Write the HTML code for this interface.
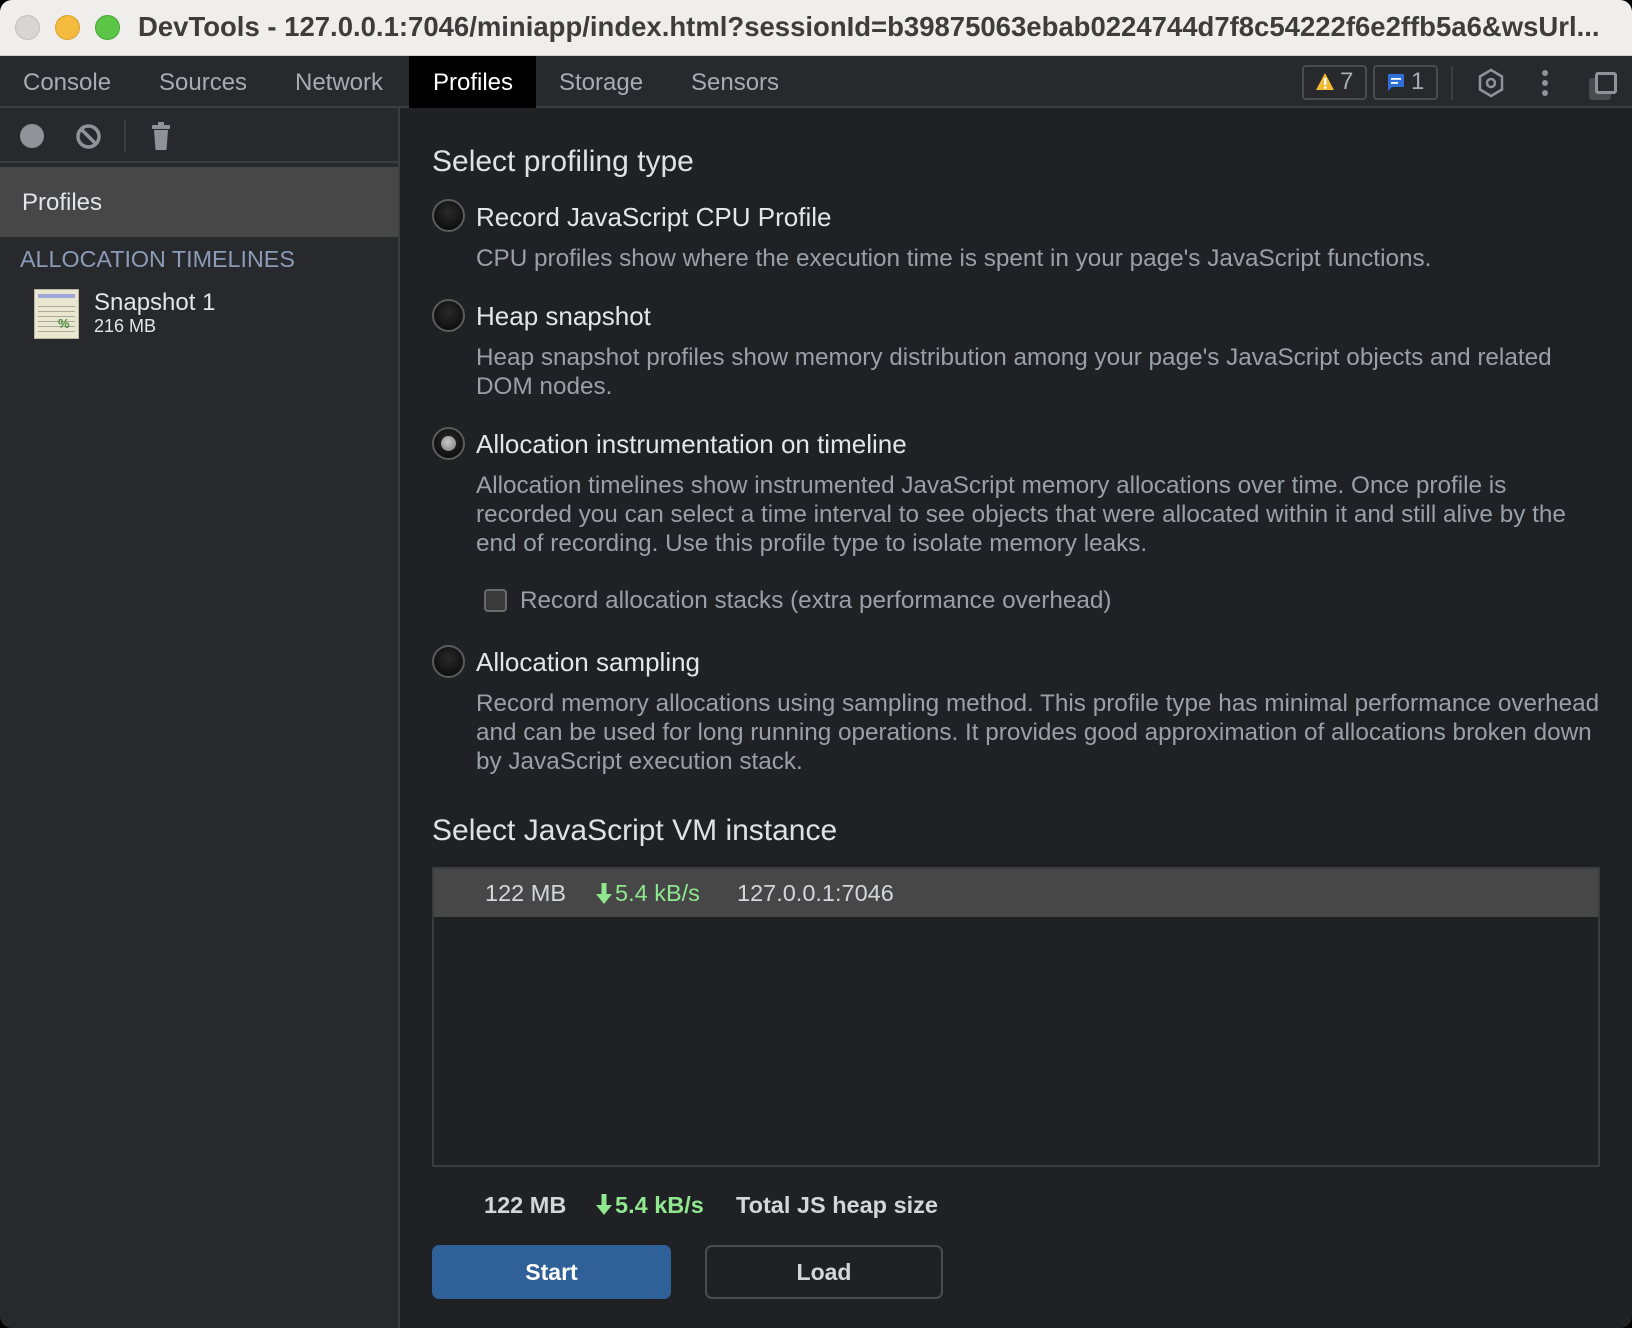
<!DOCTYPE html>
<html><head><meta charset="utf-8"><style>
*{margin:0;padding:0;box-sizing:border-box}
body{width:1632px;height:1328px;background:#000;font-family:"Liberation Sans",Arial,sans-serif;overflow:hidden;position:relative}
.win{position:absolute;left:0;top:0;width:1632px;height:1328px;border-radius:12px;overflow:hidden;background:#202124}
.a{position:absolute;white-space:nowrap}
.title{left:0;top:0;width:1632px;height:56px;background:#efeeec;border-bottom:1px solid #cfcfcf}
.tl{position:absolute;top:15px;width:25px;height:25px;border-radius:50%}
.tabs{left:0;top:56px;width:1632px;height:52px;background:#28292c;border-bottom:2px solid #3c3d40}
.tab{position:absolute;top:69px;font-size:24px;color:#a8abb0}
.side{left:0;top:108px;width:400px;height:1220px;background:#28292c;border-right:2px solid #3c3d40}
.opt{font-size:26px;color:#e3e5e8;left:476px}
.desc{font-size:24.3px;color:#9aa0a6;left:476px;line-height:29px}
.radio{position:absolute;left:432px;width:33px;height:33px;border-radius:50%;background:radial-gradient(circle at 50% 40%,#2a2a2a,#050505);border:2px solid #5c5c5c}
.st{font-size:23.5px}
</style></head><body><div class="win">
<div class="a title"></div>
<div class="tl" style="left:15px;background:#d8d6d4;border:1px solid #c2c0be"></div>
<div class="tl" style="left:55px;background:#f4bb3e;border:1px solid #dba233"></div>
<div class="tl" style="left:95px;background:#5cc446;border:1px solid #47a835"></div>
<div class="a" style="left:138px;top:11px;font-size:27.5px;font-weight:bold;color:#3d3d3d;width:1485px;overflow:hidden">DevTools - 127.0.0.1:7046/miniapp/index.html?sessionId=b39875063ebab0224744d7f8c54222f6e2ffb5a6&amp;wsUrl...</div>

<div class="a tabs"></div>
<div class="a" style="left:409px;top:56px;width:127px;height:52px;background:#000"></div>
<div class="tab" style="left:23px">Console</div>
<div class="tab" style="left:159px">Sources</div>
<div class="tab" style="left:295px">Network</div>
<div class="tab" style="left:433px;color:#fff">Profiles</div>
<div class="tab" style="left:559px">Storage</div>
<div class="tab" style="left:691px">Sensors</div>
<div class="a" style="left:1302px;top:65px;width:65px;height:35px;border:2px solid #4a4b4e;border-radius:4px"></div>
<svg class="a" style="left:1315px;top:72px" width="20" height="20" viewBox="0 0 20 20"><path d="M10 1L19 18H1Z" fill="#f2b932"/><rect x="9" y="6" width="2.4" height="7" fill="#fff"/><rect x="9" y="14.5" width="2.4" height="2.2" fill="#fff"/></svg>
<div class="a" style="left:1340px;top:68px;font-size:24px;color:#a8abb0">7</div>
<div class="a" style="left:1373px;top:65px;width:65px;height:35px;border:2px solid #4a4b4e;border-radius:4px"></div>
<svg class="a" style="left:1386px;top:72px" width="20" height="22" viewBox="0 0 20 22"><path d="M2 2h16v13H6l-4 4z" fill="#2f6fd8"/><rect x="5" y="6" width="10" height="1.8" fill="#fff"/><rect x="5" y="10" width="7" height="1.8" fill="#fff"/></svg>
<div class="a" style="left:1411px;top:68px;font-size:24px;color:#a8abb0">1</div>
<div class="a" style="left:1451px;top:66px;width:2px;height:34px;background:#3c3d40"></div>
<svg class="a" style="left:1477px;top:68px" width="28" height="30" viewBox="0 0 28 30"><path d="M14 2L25 8.5V21.5L14 28L3 21.5V8.5Z" fill="none" stroke="#8f9296" stroke-width="2.5"/><circle cx="14" cy="15" r="4" fill="none" stroke="#8f9296" stroke-width="2.5"/></svg>
<div class="a" style="left:1542px;top:70px;width:6px;height:6px;border-radius:50%;background:#8f9296;box-shadow:0 10px 0 #8f9296,0 20px 0 #8f9296"></div>
<div class="a" style="left:1589px;top:78px;width:22px;height:22px;border-radius:3px;background:#4a4b4e"></div>
<div class="a" style="left:1595px;top:72px;width:22px;height:22px;border:3px solid #8f9296;border-radius:3px;background:#28292c"></div>

<div class="a side"></div>
<div class="a" style="left:0;top:161px;width:398px;height:2px;background:#3c3d40"></div>
<div class="a" style="left:20px;top:124px;width:24px;height:24px;border-radius:50%;background:#8f9296"></div>
<svg class="a" style="left:75px;top:123px" width="27" height="27" viewBox="0 0 27 27"><circle cx="13.5" cy="13.5" r="10.5" fill="none" stroke="#8f9296" stroke-width="3.5"/><path d="M6 6L21 21" stroke="#8f9296" stroke-width="3.5"/></svg>
<div class="a" style="left:124px;top:120px;width:2px;height:32px;background:#3c3d40"></div>
<svg class="a" style="left:151px;top:121px" width="20" height="30" viewBox="0 0 20 30"><rect x="7" y="1" width="6" height="3" fill="#8f9296"/><rect x="1" y="4" width="18" height="4" rx="1" fill="#8f9296"/><path d="M3 9H17L15.5 29H4.5Z" fill="#8f9296"/></svg>
<div class="a" style="left:0;top:167px;width:398px;height:70px;background:#474747"></div>
<div class="a" style="left:22px;top:189px;font-size:24px;color:#e3e5e8">Profiles</div>
<div class="a" style="left:20px;top:246px;font-size:23.3px;color:#8b9bb8">ALLOCATION TIMELINES</div>
<div class="a" style="left:34px;top:289px;width:45px;height:50px;background:#e9e7cf;border:1px solid #b9b79e"></div>
<div class="a" style="left:38px;top:294px;width:37px;height:4px;background:#9fa7d8"></div>
<div class="a" style="left:38px;top:302px;width:37px;height:30px;background:repeating-linear-gradient(#e9e7cf 0 4px,#aaa89a 4px 5px)"></div>
<div class="a" style="left:58px;top:316px;font-size:13px;color:#4b8a3c;font-weight:bold">%</div>
<div class="a" style="left:94px;top:289px;font-size:24px;color:#e3e5e8">Snapshot 1</div>
<div class="a" style="left:94px;top:316px;font-size:18px;color:#e3e5e8">216 MB</div>

<div class="a" style="left:432px;top:145px;font-size:30px;color:#dfe1e4">Select profiling type</div>
<div class="radio" style="top:199px"></div>
<div class="a opt" style="top:202px">Record JavaScript CPU Profile</div>
<div class="a desc" style="top:244px">CPU profiles show where the execution time is spent in your page's JavaScript functions.</div>
<div class="radio" style="top:299px"></div>
<div class="a opt" style="top:301px">Heap snapshot</div>
<div class="a desc" style="top:343px">Heap snapshot profiles show memory distribution among your page's JavaScript objects and related<br>DOM nodes.</div>
<div class="radio" style="top:427px"></div>
<div class="a" style="left:441px;top:436px;width:15px;height:15px;border-radius:50%;background:radial-gradient(circle at 45% 40%,#c8c8c8,#7a7a7a)"></div>
<div class="a opt" style="top:429px">Allocation instrumentation on timeline</div>
<div class="a desc" style="top:471px">Allocation timelines show instrumented JavaScript memory allocations over time. Once profile is<br>recorded you can select a time interval to see objects that were allocated within it and still alive by the<br>end of recording. Use this profile type to isolate memory leaks.</div>
<div class="a" style="left:484px;top:589px;width:23px;height:23px;border:2px solid #6a6a6a;border-radius:4px;background:#3a3a3a"></div>
<div class="a desc" style="left:520px;top:586px">Record allocation stacks (extra performance overhead)</div>
<div class="radio" style="top:645px"></div>
<div class="a opt" style="top:647px">Allocation sampling</div>
<div class="a desc" style="top:689px">Record memory allocations using sampling method. This profile type has minimal performance overhead<br>and can be used for long running operations. It provides good approximation of allocations broken down<br>by JavaScript execution stack.</div>

<div class="a" style="left:432px;top:814px;font-size:30px;color:#dfe1e4">Select JavaScript VM instance</div>
<div class="a" style="left:432px;top:867px;width:1168px;height:300px;border:2px solid #3a3b3e"></div>
<div class="a" style="left:434px;top:869px;width:1164px;height:48px;background:#474747"></div>
<div class="a st" style="left:485px;top:880px;color:#d4d6da">122 MB</div>
<svg class="a" style="left:595px;top:882px" width="18" height="24" viewBox="0 0 18 24"><rect x="6.5" y="1" width="5" height="13" fill="#8fe88f"/><path d="M1 12H17L9 22Z" fill="#8fe88f"/></svg>
<div class="a st" style="left:615px;top:880px;color:#8fe88f">5.4 kB/s</div>
<div class="a st" style="left:737px;top:880px;color:#d4d6da">127.0.0.1:7046</div>

<div class="a st" style="left:484px;top:1192px;color:#d4d6da;font-weight:bold">122 MB</div>
<svg class="a" style="left:595px;top:1193px" width="18" height="24" viewBox="0 0 18 24"><rect x="6.5" y="1" width="5" height="13" fill="#8fe88f"/><path d="M1 12H17L9 22Z" fill="#8fe88f"/></svg>
<div class="a st" style="left:615px;top:1192px;color:#8fe88f;font-weight:bold">5.4 kB/s</div>
<div class="a st" style="left:736px;top:1192px;color:#d4d6da;font-weight:bold">Total JS heap size</div>
<div class="a" style="left:432px;top:1245px;width:239px;height:54px;background:#2f6198;border-radius:7px;color:#fff;font-size:23px;font-weight:bold;text-align:center;line-height:54px">Start</div>
<div class="a" style="left:705px;top:1245px;width:238px;height:54px;border:2px solid #4a4b4e;border-radius:7px;color:#d4d6da;font-size:23px;font-weight:bold;text-align:center;line-height:50px">Load</div>
</div>
</body></html>
